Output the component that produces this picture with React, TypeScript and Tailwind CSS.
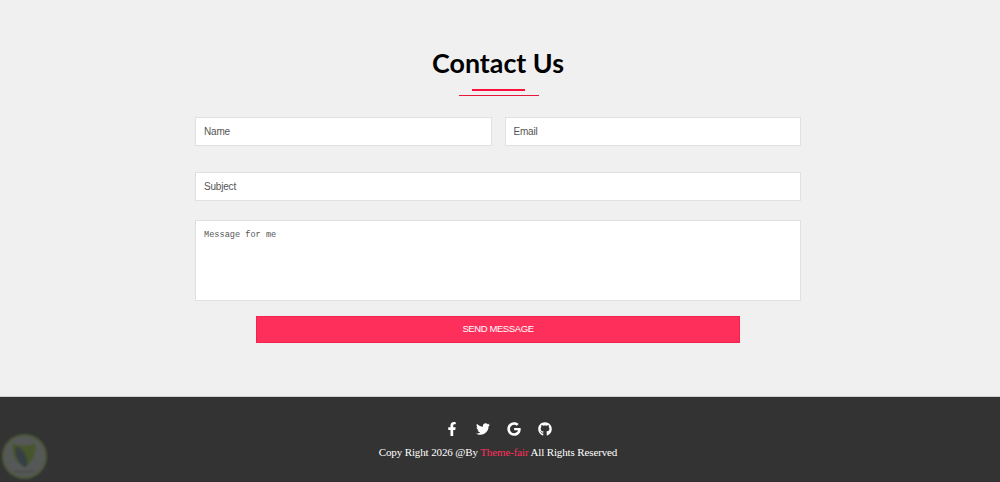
import { FaFacebookF, FaTwitter, FaGoogle, FaGithub } from "react-icons/fa";

const field =
  "w-full h-[29px] bg-white border border-[#e0e0e0] px-2 text-[10px] tracking-[-0.2px] text-[#444] placeholder:text-[#555] outline-none";

function Watermark() {
  return (
    <div className="absolute left-[2px] top-[434px] size-[45px] rounded-full bg-[#565857] border-2 border-[#4d5a3a] flex items-center justify-center blur-[0.8px]">
      <svg viewBox="0 0 46 46" className="size-[41px]">
        <path d="M10 8 C17 12 29 11 35 8 C37 20 32 29 23 35 C13 29 8 20 10 8Z" fill="#47562c" />
        <path d="M14 11 C21 15 27 23 26 33 L23 35 C15 29 11 20 14 11Z" fill="#363f45" />
        <path d="M12 40 H34" stroke="#434543" strokeWidth="2" strokeDasharray="3 2" />
      </svg>
    </div>
  );
}

export default function App() {
  return (
    <div className="relative w-[1000px] h-[482px] overflow-hidden bg-[#f0f0f0] font-['Liberation_Sans',sans-serif]">
      <section className="h-[396px] pt-[46px] pl-[195px]">
        <div className="w-[606px] flex flex-col">
          <h2 className="text-center text-[26.8px] leading-[34px] font-bold text-black font-['Lato',sans-serif]">
            Contact Us
          </h2>
          <div className="mt-[9px] w-[53px] h-[2px] ml-[277px] bg-[#ff0f3c]" />
          <div className="mt-[4px] w-[80px] h-px ml-[264px] bg-[#e8183c]" />

          <div className="mt-[21px] flex gap-[13px]">
            <input className={field} placeholder="Name" />
            <input className={field} placeholder="Email" />
          </div>
          <input className={`${field} mt-[26px]`} placeholder="Subject" />
          <textarea
            className="mt-[19px] w-full h-[81px] bg-white border border-[#e0e0e0] px-2 py-2 text-[8.6px] leading-[12px] text-[#444] placeholder:text-[#555] outline-none resize-none font-['Liberation_Mono',monospace]"
            placeholder="Message for me"
          />
          <button className="mt-[15px] ml-[61px] w-[484px] h-[27px] bg-[#ff2f5b] border border-[#f0244f] text-white text-[9.5px] tracking-[-0.4px] uppercase">
            Send Message
          </button>
        </div>
      </section>

      <footer className="h-[86px] bg-[#333333] border-t border-[#cfcfcf] pr-[4px] flex flex-col items-center pt-[25px]">
        <div className="flex items-center gap-[17px] text-white text-[14px]">
          <FaFacebookF />
          <FaTwitter />
          <FaGoogle />
          <FaGithub />
        </div>
        <p className="mt-[9px] text-[11px] tracking-[-0.13px] leading-[14px] text-white font-['Liberation_Serif',serif]">
          Copy Right 2026 @By <span className="text-[#ff2f5b]">Theme-fair</span> All Rights Reserved
        </p>
      </footer>
      <Watermark />
    </div>
  );
}
